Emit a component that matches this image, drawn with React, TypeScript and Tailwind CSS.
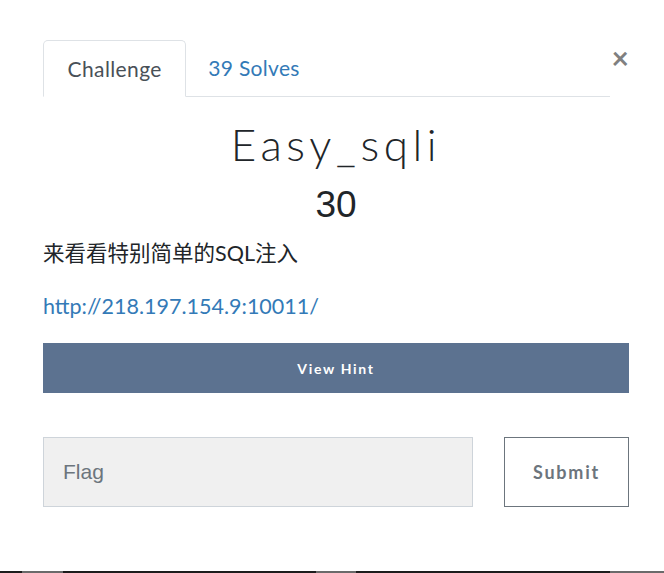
function ChallengeModal() {
    return (
        <div className="relative flex h-[573px] w-[664px] flex-col bg-white" style={{ fontFamily: "Lato, 'Noto Sans CJK SC', sans-serif" }}>
            <div className="flex flex-col pl-[43px] pr-[35px] pt-[40px]">
                <div className="flex flex-row">
                    <div className="flex flex-1 flex-row border-b border-[#dee2e6]">
                        <span className="-mb-px flex h-[57px] items-center rounded-t-[5px] border border-b-white border-[#dee2e6] bg-white px-[23.5px] text-[21px] tracking-[0.4px] text-[#495057]">Challenge</span>
                        <span className="flex h-[56px] items-center px-[22px] text-[21px] tracking-[0.3px] text-[#337ab7]">39 Solves</span>
                    </div>
                    <div className="flex w-[19px] justify-end">
                        <span className="mt-[2px] text-[30px] leading-[30px] font-bold text-[#808080]">×</span>
                    </div>
                </div>

                <h3 className="mt-[22px] text-center text-[44px] leading-[50px] font-light tracking-[4.6px] text-[#212529]">Easy_sqli</h3>
                <h4 className="mt-[16px] text-center text-[37px] leading-[40px] text-[#212529]" style={{ fontFamily: "'Liberation Sans', sans-serif" }}>30</h4>

                <p className="mt-[14px] text-[21.5px] leading-[28px] text-[#212529]">来看看特别简单的SQL注入</p>
                <a className="mt-[25px] text-[21.5px] leading-[28px] text-[#337ab7]">http://218.197.154.9:10011/</a>

                <div className="mt-[23px] flex h-[50px] items-center justify-center bg-[#5c7290] text-[14px] font-bold tracking-[1.7px] text-white">View Hint</div>

                <div className="mt-[44px] flex flex-row gap-[31px]">
                    <div className="flex h-[70px] flex-1 items-center border border-[#ced4da] bg-[#f0f0f0] px-[19px] text-[21px] text-[#6c757d]" style={{ fontFamily: "'Liberation Sans', sans-serif" }}>Flag</div>
                    <div className="flex h-[70px] w-[125px] items-center justify-center border border-[#6c757d] bg-white text-[18px] font-bold tracking-[1.8px] text-[#6c757d]">Submit</div>
                </div>
            </div>

            <div className="absolute bottom-0 left-0 flex h-[2px] w-full flex-row bg-[#1c1c1c]">
                <div className="ml-[22px] w-[41px] bg-[#6a6a6a]"></div>
                <div className="ml-[253px] w-[40px] bg-[#6a6a6a]"></div>
                <div className="ml-[254px] flex-1 bg-[#6a6a6a]"></div>
            </div>
        </div>
    )
}

export default function App() {
    return <ChallengeModal />
}
